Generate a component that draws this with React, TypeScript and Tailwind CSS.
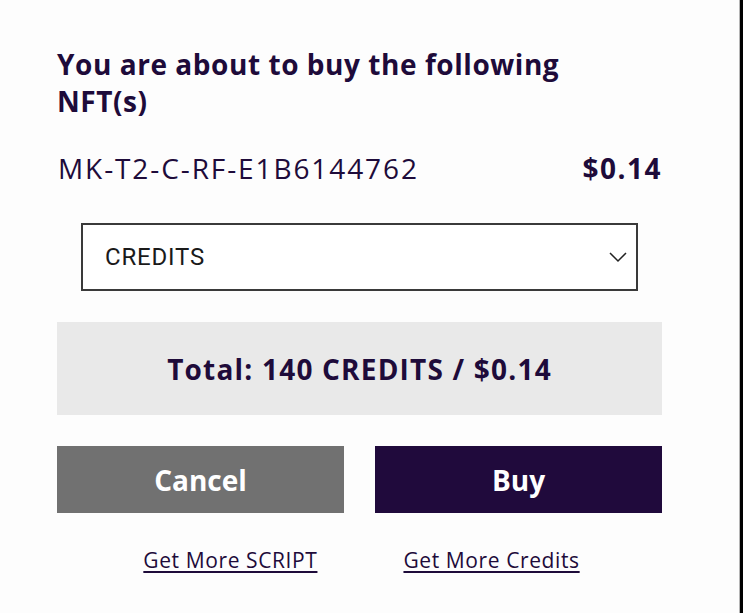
import React from "react";

export default function App() {
  return (
    <div className="flex h-[613px] w-[743px] bg-[#fdfdfd]" style={{ fontFamily: "'Open Sans', Roboto, sans-serif" }}>
      <div className="flex-1 border-r border-[#b5b5b5]">
        <div className="ml-[57px] w-[605px] pt-[46px] text-[#1e0b3a]">
          <h1 className="text-[28px] font-bold leading-[37px] tracking-[0.55px]">
            You are about to buy the following
            <br />
            NFT(s)
          </h1>
          <div className="mt-[31px] flex items-center justify-between pl-px">
            <span className="text-[28px] leading-[34px] tracking-[1.9px]">MK-T2-C-RF-E1B6144762</span>
            <span className="text-[28px] font-bold leading-[34px] tracking-[1.5px]">$0.14</span>
          </div>
          <div
            className="mx-[24px] mt-[38px] flex h-[68px] items-center justify-between border-2 border-[#3a3a3a] bg-white pl-[22px] pr-[8px] text-[#1a1a1a]"
            style={{ fontFamily: "Roboto, sans-serif" }}
          >
            <span className="text-[24px] tracking-[0.8px]">CREDITS</span>
            <svg width="20" height="12" viewBox="0 0 20 12" fill="none" stroke="#222" strokeWidth="1.5">
              <path d="M2 2l8 8 8-8" />
            </svg>
          </div>
          <div className="mt-[31px] flex h-[93px] items-center justify-center bg-[#e9e9e9]">
            <span className="text-[28px] font-bold tracking-[1.2px]">Total: 140 CREDITS / $0.14</span>
          </div>
          <div className="mt-[31px] flex justify-between">
            <button className="flex h-[67px] w-[287px] items-center justify-center bg-[#717171] text-[28px] font-bold text-white">
              Cancel
            </button>
            <button className="flex h-[67px] w-[287px] items-center justify-center bg-[#200a3c] text-[28px] font-bold text-white">
              Buy
            </button>
          </div>
          <div className="mt-[32px] flex justify-center gap-[86px] pl-[4px] text-[21px] tracking-[0.6px]">
            <a className="underline underline-offset-[3px]">Get More SCRIPT</a>
            <a className="underline underline-offset-[3px]">Get More Credits</a>
          </div>
        </div>
      </div>
      <div className="w-[3px] bg-black" />
    </div>
  );
}
